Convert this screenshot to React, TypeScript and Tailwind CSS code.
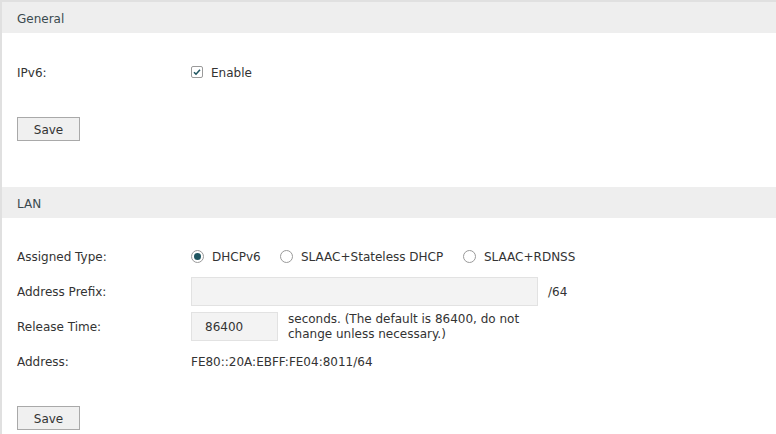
import React from "react";

function SectionHeader({ title }: { title: string }) {
  return (
    <div className="flex h-[31px] items-center bg-[#eeeeee] pl-[15px] pt-[3px] text-[#3a4a4f]">
      {title}
    </div>
  );
}

function SaveButton() {
  return (
    <button className="flex h-6 w-[63px] items-center justify-center border border-[#a9a9a9] bg-[#f0f0f0] pt-[2px] text-[#333333]">
      Save
    </button>
  );
}

function Radio({ checked, label, className }: { checked?: boolean; label: string; className?: string }) {
  return (
    <label className={`flex items-center gap-2 ${className ?? ""}`}>
      <span className="flex h-[13px] w-[13px] shrink-0 items-center justify-center rounded-full border border-[#9a9a9a] bg-white">
        {checked ? <span className="h-[7px] w-[7px] rounded-full bg-[#1f5560]" /> : null}
      </span>
      <span className="pt-[1px]">{label}</span>
    </label>
  );
}

export default function App() {
  return (
    <div
      className="min-h-[434px] border-l-2 border-t-2 border-[#e0e0e0] bg-white text-[12px] text-[#333333]"
      style={{ fontFamily: '"DejaVu Sans", sans-serif' }}
    >
      <SectionHeader title="General" />
      <div className="pl-[15px]">
        <div className="mt-[27px] flex h-6 items-center">
          <span className="w-[174px] pt-[2px]">IPv6:</span>
          <label className="flex items-center gap-2">
            <span className="flex h-3 w-3 items-center justify-center rounded-[2px] border border-[#9a9a9a] bg-white">
              <svg width="8" height="8" viewBox="0 0 8 8">
                <path d="M1 4.2 L3 6.2 L7 1.8" fill="none" stroke="#1f5560" strokeWidth="1.6" />
              </svg>
            </span>
            <span className="pt-[2px]">Enable</span>
          </label>
        </div>
        <div className="mt-[33px]">
          <SaveButton />
        </div>
      </div>

      <div className="mt-[46px]">
        <SectionHeader title="LAN" />
      </div>
      <div className="pl-[15px]">
        <div className="mt-[26px] flex h-6 items-center">
          <span className="w-[174px] pt-[2px]">Assigned Type:</span>
          <div className="flex items-center">
            <Radio checked label="DHCPv6" className="w-[89px]" />
            <Radio label="SLAAC+Stateless DHCP" className="w-[183px]" />
            <Radio label="SLAAC+RDNSS" />
          </div>
        </div>
        <div className="mt-[9px] flex items-center">
          <span className="w-[174px] pt-[1px]">Address Prefix:</span>
          <div className="h-[29px] w-[347px] border border-[#e2e2e2] bg-[#f3f3f3]" />
          <span className="ml-[10px] pt-[1px]">/64</span>
        </div>
        <div className="mt-[6px] flex h-[29px] items-center">
          <span className="w-[174px] pt-[1px]">Release Time:</span>
          <div className="flex h-[29px] w-[87px] items-center border border-[#e2e2e2] bg-[#f3f3f3] pl-[13px] pt-[1px]">
            86400
          </div>
          <span className="ml-[10px] w-[240px] leading-[15px]">
            seconds. (The default is 86400, do not change unless necessary.)
          </span>
        </div>
        <div className="mt-[8px] flex h-6 items-center">
          <span className="w-[174px] pt-[1px]">Address:</span>
          <span className="pt-[1px]">FE80::20A:EBFF:FE04:8011/64</span>
        </div>
        <div className="mt-[33px]">
          <SaveButton />
        </div>
      </div>
    </div>
  );
}
